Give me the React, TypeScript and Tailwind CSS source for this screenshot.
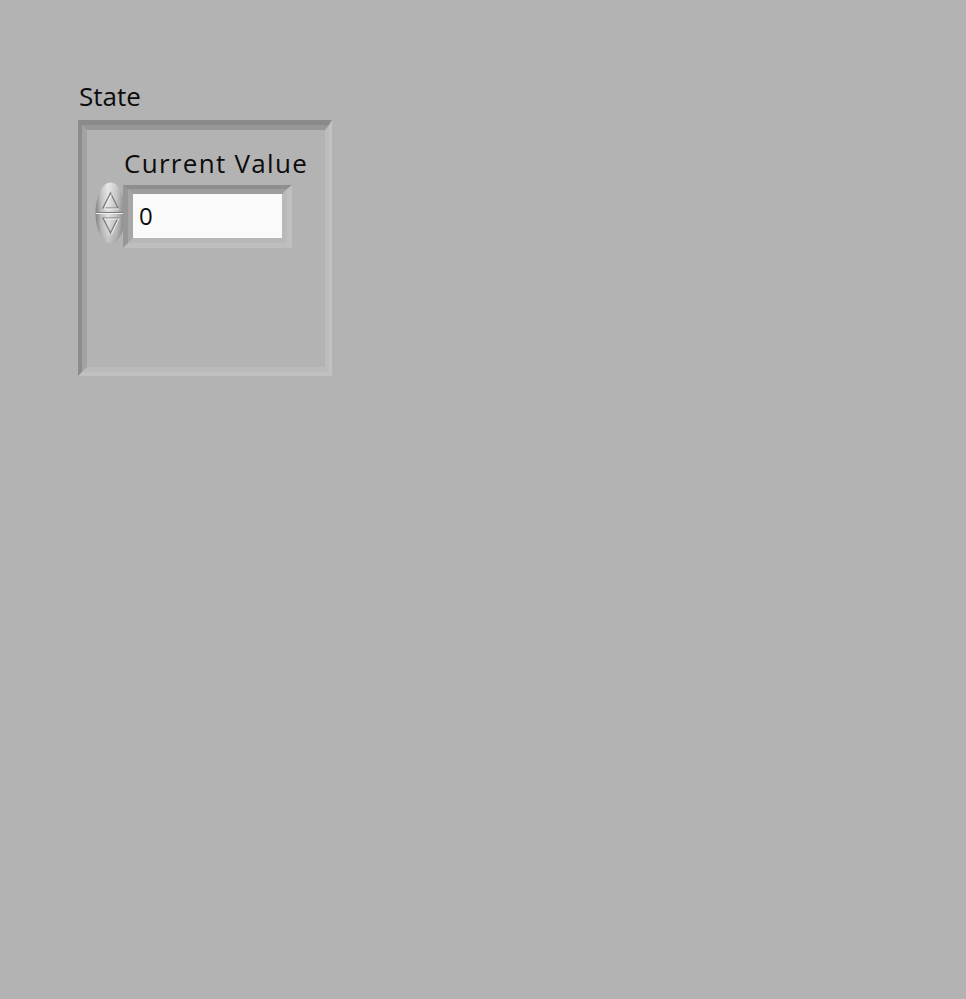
import React from "react";

function Spinner() {
  return (
    <svg width="31" height="62" viewBox="0 0 31 62" className="block">
      <defs>
        <linearGradient id="sg" x1="0" y1="0" x2="1" y2="0">
          <stop offset="0" stopColor="#7e7e7e" />
          <stop offset="0.2" stopColor="#bdbdbd" />
          <stop offset="0.42" stopColor="#e2e2e2" />
          <stop offset="0.7" stopColor="#bfbfbf" />
          <stop offset="1" stopColor="#7c7c7c" />
        </linearGradient>
        <linearGradient id="sv" x1="0" y1="0" x2="0" y2="1">
          <stop offset="0" stopColor="#ffffff" stopOpacity="0.2" />
          <stop offset="0.5" stopColor="#ffffff" stopOpacity="0" />
          <stop offset="1" stopColor="#000000" stopOpacity="0.15" />
        </linearGradient>
      </defs>
      <ellipse cx="15.5" cy="31" rx="15" ry="30.5" fill="url(#sg)" />
      <ellipse cx="15.5" cy="31" rx="15" ry="30.5" fill="url(#sv)" />
      <line x1="1" y1="30.5" x2="30" y2="30.5" stroke="#7a7a7a" strokeWidth="1" />
      <line x1="1" y1="31.5" x2="30" y2="31.5" stroke="#f0f0f0" strokeWidth="1" />
      <path d="M15.5 11 L8 26 L23 26 Z" fill="none" stroke="#7a7a7a" strokeWidth="1.2" />
      <path d="M16.5 12.5 L9.2 27 L24 27" fill="none" stroke="#f4f4f4" strokeWidth="0.9" />
      <path d="M8 36 L23 36 L15.5 51 Z" fill="none" stroke="#7a7a7a" strokeWidth="1.2" />
      <path d="M9 37 L24 37 L16.5 52" fill="none" stroke="#f4f4f4" strokeWidth="0.9" />
    </svg>
  );
}

export default function App() {
  const font = { fontFamily: '"Open Sans", "Noto Sans", sans-serif' };
  return (
    <div className="w-full h-[999px] bg-[#b3b3b3] pl-[78px] pt-[83px]" style={font}>
      <div className="text-[26px] leading-[26px] text-[#0c0c0c] ml-[1px] mb-[11px]">State</div>
      <div className="w-[254px] h-[256px] border-t-[5px] border-l-[4px] border-r-[3px] border-b-[4px] border-t-[#8a8a8a] border-l-[#8c8c8c] border-r-[#c2c2c2] border-b-[#c0c0c0]">
        <div className="w-full h-full border-t-[5px] border-l-[5px] border-r-[4px] border-b-[5px] border-t-[#979797] border-l-[#a2a2a2] border-r-[#bcbcbc] border-b-[#bababa] bg-[#b3b3b3]">
          <div className="pt-[20px]">
            <div className="text-[26px] leading-[26px] text-[#0c0c0c] ml-[37px] tracking-[1.3px]">Current Value</div>
            <div className="flex items-start mt-[6px] ml-[8px]">
              <div>
                <Spinner />
              </div>
              <div className="mt-[3px] -ml-[3px] w-[169px] h-[63px] border-t-[4px] border-l-[5px] border-r-[5px] border-b-[5px] border-t-[#8e8e8e] border-l-[#979797] border-r-[#c0c0c0] border-b-[#bebebe]">
                <div className="w-full h-full border-t-[5px] border-l-[5px] border-r-[5px] border-b-[5px] border-t-[#9d9d9d] border-l-[#a6a6a6] border-r-[#b9b9b9] border-b-[#b8b8b8]">
                  <div className="w-full h-full bg-[#fafafa] flex items-center pl-[6px] text-[24px] leading-[24px] text-[#0c0c0c]">
                    0
                  </div>
                </div>
              </div>
            </div>
          </div>
        </div>
      </div>
    </div>
  );
}
